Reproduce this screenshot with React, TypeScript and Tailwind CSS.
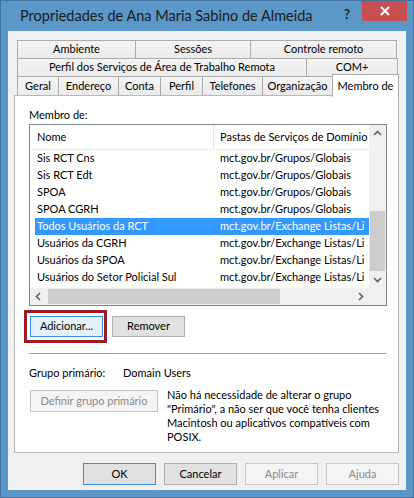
const ui = "font-['Lato','Liberation_Sans',sans-serif]";

const rows = [
  { name: "Sis RCT Cns", path: "mct.gov.br/Grupos/Globais" },
  { name: "Sis RCT Edt", path: "mct.gov.br/Grupos/Globais" },
  { name: "SPOA", path: "mct.gov.br/Grupos/Globais" },
  { name: "SPOA CGRH", path: "mct.gov.br/Grupos/Globais" },
  { name: "Todos Usuários da RCT", path: "mct.gov.br/Exchange Listas/Li", selected: true },
  { name: "Usuários da CGRH", path: "mct.gov.br/Exchange Listas/Li" },
  { name: "Usuários da SPOA", path: "mct.gov.br/Exchange Listas/Li" },
  { name: "Usuários do Setor Policial Sul", path: "mct.gov.br/Exchange Listas/Li" },
];

function Chevron({ dir }: { dir: "up" | "down" | "left" | "right" }) {
  const pts = {
    up: "1,6 4.5,2.5 8,6",
    down: "1,3 4.5,6.5 8,3",
    left: "6,1 2.5,4.5 6,8",
    right: "3,1 6.5,4.5 3,8",
  }[dir];
  return (
    <svg width="9" height="9" viewBox="0 0 9 9">
      <polyline points={pts} fill="none" stroke="#606060" strokeWidth="1.6" />
    </svg>
  );
}

function Tab({ label, w, h = "h-[19px]" }: { label: string; w: string; h?: string }) {
  return (
    <div className={`${w} ${h} -ml-px flex items-center justify-center border border-[#acacac] bg-gradient-to-b from-[#f3f3f3] to-[#ebebeb] text-[11px] text-black`}>
      {label}
    </div>
  );
}

function Button({ label, variant = "normal", w = "w-[73px]", h = "h-[22px]" }: { label: string; variant?: "normal" | "focus" | "disabled" | "default"; w?: string; h?: string }) {
  const style = {
    normal: "border-[#adadad] bg-[#e1e1e1] text-black",
    focus: "border-[#3c8ee0] bg-[#e5f1fb] text-black",
    default: "border-[#3c8ee0] bg-[#e1e1e1] text-black",
    disabled: "border-[#c6c6c6] bg-[#f4f4f4] text-[#8a8a8a]",
  }[variant];
  return (
    <div className={`${w} ${h} flex items-center justify-center border text-[11px] ${style}`}>
      {label}
    </div>
  );
}

export default function App() {
  return (
    <div className={`${ui} flex h-[498px] w-[414px] flex-col border border-[#41739e] bg-[#5b98c7]`}>
      {/* Title bar */}
      <div className="flex h-[30px] items-start">
        <div className="pl-[19px] pt-[5px] text-[14.5px] leading-[20px] text-[#1a1a1a]">
          Propriedades de Ana Maria Sabino de Almeida
        </div>
        <div className="ml-auto pt-[5px] pr-[12px] text-[13px] font-bold leading-[16px] text-[#1e1e1e]">?</div>
        <div className="mr-[6px] flex h-[20px] w-[45px] items-center justify-center bg-[#c75050]">
          <svg width="10" height="10" viewBox="0 0 10 10">
            <path d="M1 1 L9 9 M9 1 L1 9" stroke="white" strokeWidth="2" />
          </svg>
        </div>
      </div>

      {/* Client area */}
      <div className="mx-[7px] mb-[7px] flex flex-1 flex-col bg-[#f0f0f0] pl-[6px] pr-[7px] pt-[9px]">
        {/* Tabs */}
        <div className="ml-[4px] flex flex-col">
          <div className="flex">
            <Tab label="Ambiente" w="w-[119px]" />
            <Tab label="Sessões" w="w-[116px]" />
            <Tab label="Controle remoto" w="w-[147px]" />
          </div>
          <div className="-mt-px flex">
            <Tab label="Perfil dos Serviços de Área de Trabalho Remota" w="w-[290px]" />
            <Tab label="COM+" w="w-[92px]" />
          </div>
          <div className="-mt-[3px] flex h-[22px] items-end">
            <Tab label="Geral" w="w-[42px]" h="h-[20px]" />
            <Tab label="Endereço" w="w-[61px]" h="h-[20px]" />
            <Tab label="Conta" w="w-[43px]" h="h-[20px]" />
            <Tab label="Perfil" w="w-[43px]" h="h-[20px]" />
            <Tab label="Telefones" w="w-[61px]" h="h-[20px]" />
            <Tab label="Organização" w="w-[71px]" h="h-[20px]" />
            <div className="relative z-10 -mb-px -ml-px flex h-[23px] w-[67px] items-start justify-center border border-b-0 border-[#acacac] bg-white pt-[3px] text-[11px] text-black">
              Membro de
            </div>
          </div>
        </div>

        {/* Tab panel */}
        <div className="-mt-px flex h-[358px] flex-col border border-[#b9b9b9] bg-white px-[14px] pt-[11px]">
          <div className="text-[11px] leading-[16px] text-black">Membro de:</div>

          {/* List view */}
          <div className="mt-px flex h-[182px] w-[358px] flex-col border border-[#828790] text-[11px] text-black">
            <div className="flex h-[163px]">
              <div className="flex w-[339px] flex-col overflow-hidden">
                <div className="flex h-[25px] shrink-0 border-b border-[#e6edf5]">
                  <div className="flex w-[184px] shrink-0 items-center border-r border-[#e5e5e5] pl-[7px]">Nome</div>
                  <div className="flex items-center whitespace-nowrap pl-[6px]">Pastas de Serviços de Domínio</div>
                </div>
                {rows.map((r) => (
                  <div
                    key={r.name}
                    className={`ml-[5px] flex h-[17px] shrink-0 items-center whitespace-nowrap ${r.selected ? "bg-[#3399ff] text-white" : ""}`}
                  >
                    <div className="w-[183px] shrink-0 pl-[2px]">{r.name}</div>
                    <div className="pl-[2px]">{r.path}</div>
                  </div>
                ))}
              </div>
              {/* Vertical scrollbar */}
              <div className="flex w-[17px] flex-col bg-[#f0f0f0]">
                <div className="flex h-[17px] items-center justify-center">
                  <Chevron dir="up" />
                </div>
                <div className="flex flex-1 flex-col justify-end px-[1px]">
                  <div className="h-[60px] bg-[#cdcdcd]" />
                </div>
                <div className="flex h-[17px] items-center justify-center">
                  <Chevron dir="down" />
                </div>
              </div>
            </div>
            {/* Horizontal scrollbar */}
            <div className="flex h-[17px]">
              <div className="flex w-[339px] bg-[#f0f0f0]">
                <div className="flex w-[17px] items-center justify-center">
                  <Chevron dir="left" />
                </div>
                <div className="flex flex-1 py-[1px] pl-[1px]">
                  <div className="w-[232px] bg-[#cdcdcd]" />
                </div>
                <div className="flex w-[17px] items-center justify-center">
                  <Chevron dir="right" />
                </div>
              </div>
              <div className="w-[17px] bg-[#f0f0f0]" />
            </div>
          </div>

          {/* Add / remove */}
          <div className="ml-px mt-[10px] flex gap-[9px]">
            <div className="relative">
              <Button label="Adicionar..." variant="focus" h="h-[21px]" />
              <div className="absolute -left-[6px] -top-[6px] h-[33px] w-[83px] border-[3px] border-[#9c1b24]" />
            </div>
            <Button label="Remover" h="h-[21px]" />
          </div>

          <div className="mt-[16px] h-px w-[357px] bg-[#a0a0a0]" />

          <div className="mt-[11px] flex text-[11px] leading-[16px] text-black">
            <div className="w-[94px]">Grupo primário:</div>
            <div>Domain Users</div>
          </div>

          <div className="ml-px mt-[9px] flex items-start">
            <Button label="Definir grupo primário" variant="disabled" w="w-[128px]" />
            <p className="-mt-[2px] ml-[9px] text-[11px] leading-[14px] text-black">
              Não há necessidade de alterar o grupo
              <br />
              "Primário", a não ser que você tenha clientes
              <br />
              Macintosh ou aplicativos compatíveis com
              <br />
              POSIX.
            </p>
          </div>
        </div>

        {/* Dialog buttons */}
        <div className="mt-[10px] flex justify-end gap-[8px]">
          <Button label="OK" variant="default" />
          <Button label="Cancelar" />
          <Button label="Aplicar" variant="disabled" />
          <Button label="Ajuda" variant="disabled" />
        </div>
      </div>
    </div>
  );
}
